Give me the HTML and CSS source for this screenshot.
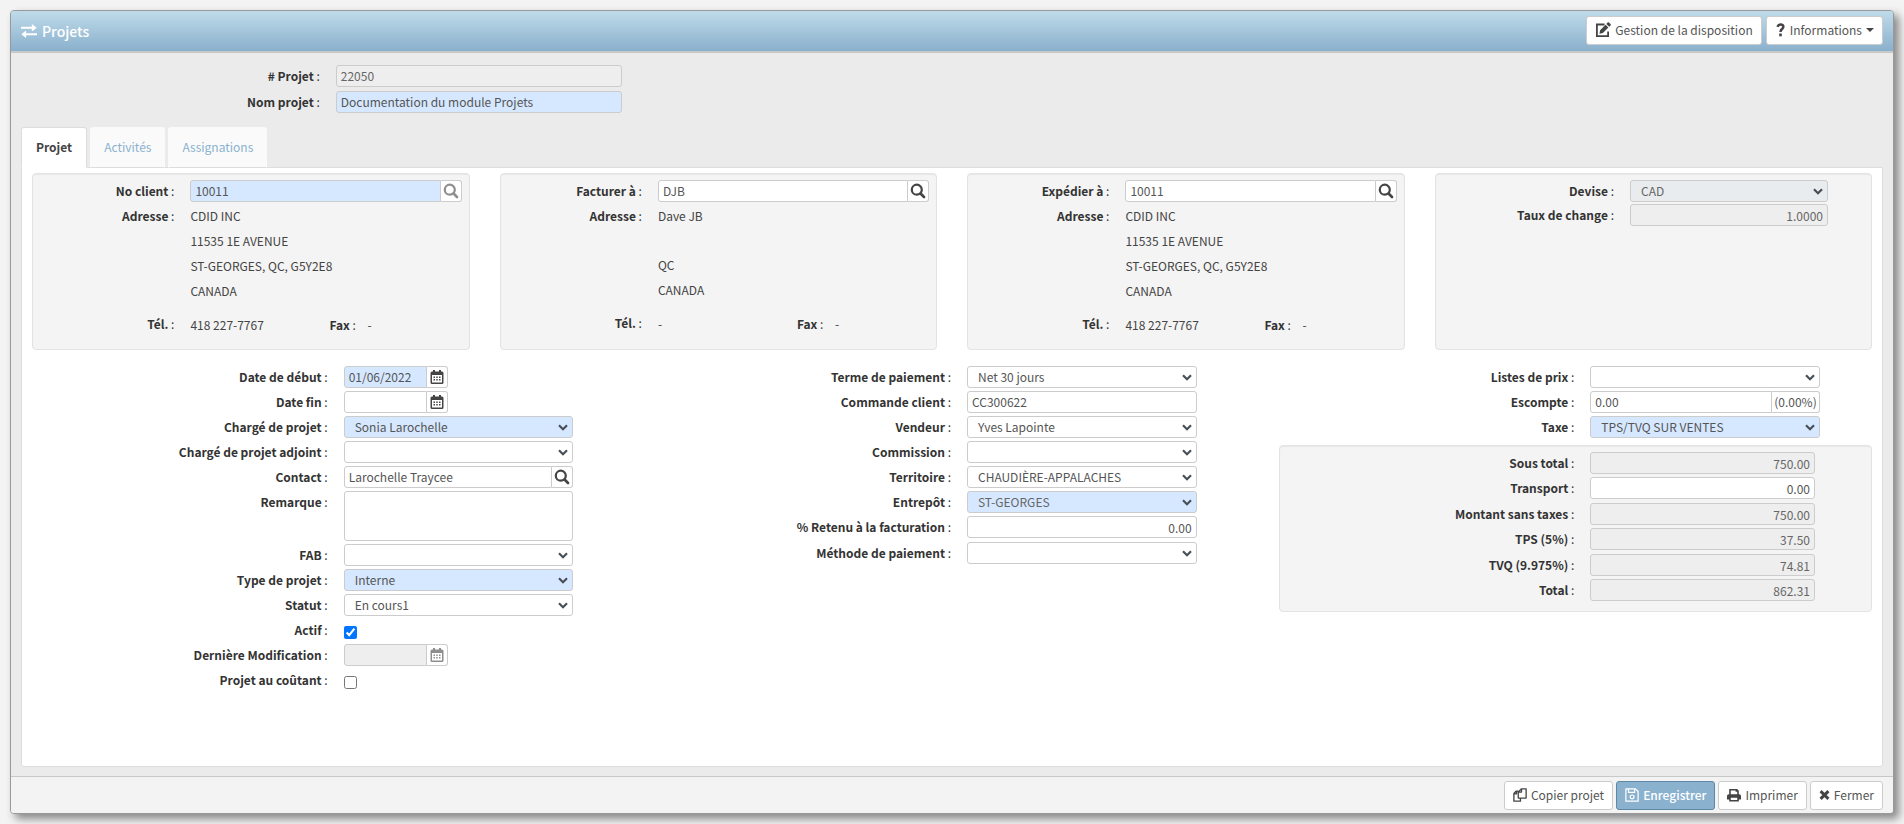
FILE: index.html
```html
<!DOCTYPE html>
<html lang="fr">
<head>
    <meta charset="UTF-8">
    <meta name="viewport" content="width=device-width, initial-scale=1.0">
    <title>Projets</title>
    <link rel="stylesheet" href="styles.css">
</head>
<body>
    <!-- Shared icons -->
    <svg class="sprite" aria-hidden="true">
        <symbol id="i-exchange" viewBox="0 0 17 14"><path d="M0 2.500h11.500V.5Q11.500-.5 12.300.2L16.700 3.500 12.300 6.900Q11.500 7.500 11.500 6.500V4.600H0zM17 9.400H5.500V7.500Q5.500 6.500 4.700 7.100L.3 10.500 4.700 13.800Q5.500 14.500 5.500 13.500V11.500H17z"/></symbol>
        <symbol id="i-search" viewBox="0 0 16 16"><path fill="none" stroke="currentColor" stroke-width="2.200" d="M11.800 6.700a5 5 0 1 1-10 0a5 5 0 0 1 10 0z"/><path fill="none" stroke="currentColor" stroke-width="2.700" stroke-linecap="round" d="M10.800 10.800l3.200 3.200"/></symbol>
        <symbol id="i-calendar" viewBox="0 0 14 14"><path fill-rule="evenodd" d="M3 0h2v1.500h4V0h2v1.500h1a1.500 1.500 0 0 1 1.500 1.500v9.500A1.500 1.500 0 0 1 12 14H2A1.500 1.500 0 0 1 .5 12.500V3A1.500 1.500 0 0 1 2 1.500h1zM2 5v7.500h10V5z"/><path d="M3.500 6.500H5V8H3.500zM6.250 6.500h1.500V8h-1.500zM9 6.500h1.500V8H9zM3.500 9H5v1.500H3.500zM6.250 9h1.500v1.500h-1.500zM9 9h1.500v1.500H9z"/></symbol>
        <symbol id="i-edit" viewBox="0 0 16 16"><path fill="none" stroke="currentColor" stroke-width="1.800" d="M9.500 2.500H1.900v11.600h11.200V9.500"/><path d="M12.600.6a1 1 0 0 1 1.400 0l1.500 1.500a1 1 0 0 1 0 1.400l-1.300 1.300-2.900-2.900zM10.500 2.700l2.900 2.900-5.500 5.500-3.400.6.600-3.500z"/></symbol>
        <symbol id="i-question" viewBox="0 0 10 16"><path fill="none" stroke="currentColor" stroke-width="2.800" d="M1.500 4.500C2.200 2.400 3.400 1.700 5 1.700c2 0 3.300 1.100 3.300 2.700C8.300 7 5 6.800 5 10.200"/><path d="M3.500 12h3v3.200h-3z"/></symbol>
        <symbol id="i-copy" viewBox="0 0 16 16"><path fill="none" stroke="currentColor" stroke-width="1.500" stroke-linejoin="round" d="M9.500 1H15v10.500H6V4.500zM9.700 1v3.700H6M6 3.500H3.700L1 6.200V15h7.500v-3.300M4 3.700v3H1"/></symbol>
        <symbol id="i-save" viewBox="0 0 16 16"><path fill="none" stroke="currentColor" stroke-width="1.400" stroke-linejoin="round" d="M1 1h11l3 3v11H1zM4 1v4h7V1M10.300 10.200a2.200 2.200 0 1 1-4.400 0a2.200 2.200 0 0 1 4.400 0z"/></symbol>
        <symbol id="i-print" viewBox="0 0 16 16"><path fill-rule="evenodd" d="M2.500 1h9l2 2v4h.5a2 2 0 0 1 2 2v4h-2.500v2.500h-11V13H0V9a2 2 0 0 1 2-2h.5zM4.300 2.800V7h7.400V4.300h-1.900V2.800zM4.300 11v2.700h7.400V11z"/></symbol>
        <symbol id="i-times" viewBox="0 0 14 14"><path fill="none" stroke="currentColor" stroke-width="3.800" d="M2 2l10 10M12 2L2 12"/></symbol>
    </svg>

    <div class="window">
        <header class="window-header">
            <h1><svg class="icon"><use href="#i-exchange"/></svg>Projets</h1>
            <div class="buttons">
                <button type="button" class="btn"><svg class="icon"><use href="#i-edit"/></svg>Gestion de la disposition</button>
                <button type="button" class="btn"><svg class="icon icon-narrow"><use href="#i-question"/></svg>Informations<span class="caret"></span></button>
            </div>
        </header>

        <main class="window-body">
            <div class="project-head">
                <div class="row"><label for="noProjet"><b># Projet</b> :</label><input id="noProjet" class="control" value="22050" disabled></div>
                <div class="row"><label for="nomProjet"><b>Nom projet</b> :</label><input id="nomProjet" class="control required" value="Documentation du module Projets"></div>
            </div>

            <nav class="tabs">
                <a href="#projet" class="tab active">Projet</a>
                <a href="#activites" class="tab">Activités</a>
                <a href="#assignations" class="tab">Assignations</a>
            </nav>

            <section class="panel" id="projet">
                <div class="cards">
                    <!-- Client -->
                    <div class="card">
                        <div class="row">
                            <label for="noClient"><b>No client</b> :</label>
                            <div class="group"><input id="noClient" class="control required" value="10011"><button type="button" class="addon" aria-label="Rechercher" disabled><svg class="icon"><use href="#i-search"/></svg></button></div>
                        </div>
                        <div class="row address">
                            <span class="label"><b>Adresse</b> :</span>
                            <div><p>CDID INC</p><p>11535 1E AVENUE</p><p>ST-GEORGES, QC, G5Y2E8</p><p>CANADA</p></div>
                        </div>
                        <div class="row phone">
                            <span class="label"><b>Tél.</b> :</span>
                            <div class="phone-values"><span>418 227-7767</span><span><b>Fax</b> :</span><span>-</span></div>
                        </div>
                    </div>
                    <!-- Facturation -->
                    <div class="card">
                        <div class="row">
                            <label for="facturer"><b>Facturer à</b> :</label>
                            <div class="group"><input id="facturer" class="control" value="DJB"><button type="button" class="addon" aria-label="Rechercher"><svg class="icon"><use href="#i-search"/></svg></button></div>
                        </div>
                        <div class="row address">
                            <span class="label"><b>Adresse</b> :</span>
                            <div><p>Dave JB</p><p class="blank"></p><p>QC</p><p>CANADA</p></div>
                        </div>
                        <div class="row phone">
                            <span class="label"><b>Tél.</b> :</span>
                            <div class="phone-values"><span>-</span><span><b>Fax</b> :</span><span>-</span></div>
                        </div>
                    </div>
                    <!-- Expédition -->
                    <div class="card">
                        <div class="row">
                            <label for="expedier"><b>Expédier à</b> :</label>
                            <div class="group"><input id="expedier" class="control" value="10011"><button type="button" class="addon" aria-label="Rechercher"><svg class="icon"><use href="#i-search"/></svg></button></div>
                        </div>
                        <div class="row address">
                            <span class="label"><b>Adresse</b> :</span>
                            <div><p>CDID INC</p><p>11535 1E AVENUE</p><p>ST-GEORGES, QC, G5Y2E8</p><p>CANADA</p></div>
                        </div>
                        <div class="row phone">
                            <span class="label"><b>Tél.</b> :</span>
                            <div class="phone-values"><span>418 227-7767</span><span><b>Fax</b> :</span><span>-</span></div>
                        </div>
                    </div>
                    <!-- Devise -->
                    <div class="card currency">
                        <div class="row"><label for="devise"><b>Devise</b> :</label><select id="devise" class="control" disabled><option>CAD</option></select></div>
                        <div class="row"><label for="taux"><b>Taux de change</b> :</label><input id="taux" class="control amount" value="1.0000" disabled></div>
                    </div>
                </div>

                <div class="columns">
                    <div class="column">
                        <div class="row"><label for="dateDebut"><b>Date de début</b> :</label><div class="group date"><input id="dateDebut" class="control required" value="01/06/2022"><button type="button" class="addon" aria-label="Calendrier"><svg class="icon icon-small"><use href="#i-calendar"/></svg></button></div></div>
                        <div class="row"><label for="dateFin"><b>Date fin</b> :</label><div class="group date"><input id="dateFin" class="control"><button type="button" class="addon" aria-label="Calendrier"><svg class="icon icon-small"><use href="#i-calendar"/></svg></button></div></div>
                        <div class="row"><label for="charge"><b>Chargé de projet</b> :</label><select id="charge" class="control required"><option>Sonia Larochelle</option></select></div>
                        <div class="row"><label for="adjoint"><b>Chargé de projet adjoint</b> :</label><select id="adjoint" class="control"><option></option></select></div>
                        <div class="row"><label for="contact"><b>Contact</b> :</label><div class="group"><input id="contact" class="control" value="Larochelle Traycee"><button type="button" class="addon" aria-label="Rechercher"><svg class="icon"><use href="#i-search"/></svg></button></div></div>
                        <div class="row"><label for="remarque"><b>Remarque</b> :</label><textarea id="remarque" class="control"></textarea></div>
                        <div class="row"><label for="fab"><b>FAB</b> :</label><select id="fab" class="control"><option></option></select></div>
                        <div class="row"><label for="type"><b>Type de projet</b> :</label><select id="type" class="control required"><option>Interne</option></select></div>
                        <div class="row"><label for="statut"><b>Statut</b> :</label><select id="statut" class="control"><option>En cours1</option></select></div>
                        <div class="row"><label for="actif"><b>Actif</b> :</label><input type="checkbox" id="actif" checked></div>
                        <div class="row"><label for="modif"><b>Dernière Modification</b> :</label><div class="group date"><input id="modif" class="control" disabled><button type="button" class="addon" aria-label="Calendrier" disabled><svg class="icon icon-small"><use href="#i-calendar"/></svg></button></div></div>
                        <div class="row"><label for="coutant"><b>Projet au coûtant</b> :</label><input type="checkbox" id="coutant"></div>
                    </div>

                    <div class="column">
                        <div class="row"><label for="terme"><b>Terme de paiement</b> :</label><select id="terme" class="control"><option>Net 30 jours</option></select></div>
                        <div class="row"><label for="commande"><b>Commande client</b> :</label><input id="commande" class="control" value="CC300622"></div>
                        <div class="row"><label for="vendeur"><b>Vendeur</b> :</label><select id="vendeur" class="control"><option>Yves Lapointe</option></select></div>
                        <div class="row"><label for="commission"><b>Commission</b> :</label><select id="commission" class="control"><option></option></select></div>
                        <div class="row"><label for="territoire"><b>Territoire</b> :</label><select id="territoire" class="control"><option>CHAUDIÈRE-APPALACHES</option></select></div>
                        <div class="row"><label for="entrepot"><b>Entrepôt</b> :</label><select id="entrepot" class="control required" disabled><option>ST-GEORGES</option></select></div>
                        <div class="row row-tall"><label for="retenu"><b>% Retenu à la facturation</b> :</label><input id="retenu" class="control amount" value="0.00"></div>
                        <div class="row"><label for="methode"><b>Méthode de paiement</b> :</label><select id="methode" class="control"><option></option></select></div>
                    </div>

                    <div class="column">
                        <div class="row"><label for="prix"><b>Listes de prix</b> :</label><select id="prix" class="control"><option></option></select></div>
                        <div class="row"><label for="escompte"><b>Escompte</b> :</label><div class="group"><input id="escompte" class="control" value="0.00"><span class="addon percent">(0.00%)</span></div></div>
                        <div class="row"><label for="taxe"><b>Taxe</b> :</label><select id="taxe" class="control required"><option>TPS/TVQ SUR VENTES</option></select></div>

                        <!-- Totaux -->
                        <div class="card totals">
                            <div class="row"><label for="sousTotal"><b>Sous total</b> :</label><input id="sousTotal" class="control amount" value="750.00" disabled></div>
                            <div class="row row-tall"><label for="transport"><b>Transport</b> :</label><input id="transport" class="control amount" value="0.00"></div>
                            <div class="row"><label for="montant"><b>Montant sans taxes</b> :</label><input id="montant" class="control amount" value="750.00" disabled></div>
                            <div class="row row-tall"><label for="tps"><b>TPS (5%)</b> :</label><input id="tps" class="control amount" value="37.50" disabled></div>
                            <div class="row"><label for="tvq"><b>TVQ (9.975%)</b> :</label><input id="tvq" class="control amount" value="74.81" disabled></div>
                            <div class="row row-tall"><label for="total"><b>Total</b> :</label><input id="total" class="control amount" value="862.31" disabled></div>
                        </div>
                    </div>
                </div>
            </section>
        </main>

        <footer class="window-footer">
            <button type="button" class="btn"><svg class="icon icon-small"><use href="#i-copy"/></svg>Copier projet</button>
            <button type="button" class="btn btn-primary"><svg class="icon icon-small"><use href="#i-save"/></svg>Enregistrer</button>
            <button type="button" class="btn"><svg class="icon icon-small"><use href="#i-print"/></svg>Imprimer</button>
            <button type="button" class="btn"><svg class="icon icon-narrow"><use href="#i-times"/></svg>Fermer</button>
        </footer>
    </div>
</body>
</html>
```
FILE: styles.css
```css
* {
    box-sizing: border-box;
}

body {
    margin: 0;
    padding: 10px;
    min-height: 100vh;
    display: flex;
    background-color: #f3f3f3;
    color: #333;
    font-family: "Noto Sans CJK SC", "Open Sans", sans-serif;
    font-size: 12px;
    line-height: 20px;
}

h1,
p {
    margin: 0;
}

input,
select,
textarea,
button {
    margin: 0;
    font: inherit;
    color: #555;
}

.sprite {
    position: absolute;
    width: 0;
    height: 0;
}

.icon {
    width: 16px;
    height: 16px;
    flex: none;
    fill: currentColor;
}

.icon-small {
    width: 14px;
    height: 14px;
}

.icon-narrow {
    width: 11px;
    height: 14px;
}

/* Window frame */
.window {
    flex: 1;
    display: flex;
    flex-direction: column;
    border: 1px solid #999;
    border-radius: 4px;
    background-color: #ebebeb;
    box-shadow: 5px 5px 8px #888;
}

.window-header {
    display: flex;
    justify-content: space-between;
    align-items: center;
    padding: 5px 10px 6px;
    border-bottom: 2px solid #c8c8c8;
    border-radius: 3px 3px 0 0;
    background-image: linear-gradient(#bfdbea, #8ab0cd);
}

.window-header h1 {
    display: flex;
    align-items: center;
    gap: 5px;
    color: #fff;
    font-size: 14px;
    font-weight: 500;
}

.buttons {
    display: flex;
    gap: 4px;
}

.window-body {
    flex: 1;
    display: flex;
    flex-direction: column;
    padding: 12px 10px 9px;
}

.window-footer {
    display: flex;
    justify-content: flex-end;
    gap: 3px;
    padding: 4px 10px 3px;
    border-top: 1px solid #c8c8c8;
    border-radius: 0 0 3px 3px;
    background-color: #f3f3f3;
}

/* Buttons */
.btn {
    display: flex;
    align-items: center;
    gap: 4px;
    height: 29px;
    padding: 0 8px 1px;
    border: 1px solid #ccc;
    border-radius: 3px;
    background-color: #fff;
    color: #555;
}

.btn .icon {
    color: #444;
}

.btn-primary,
.btn-primary .icon {
    color: #fff;
}

.btn-primary {
    border-color: #5f88a5;
    background-color: #8ab2cf;
    font-weight: 500;
}

.caret {
    border: 4px solid transparent;
    border-top-color: #444;
    border-bottom: 0;
}

/* Form rows */
.row {
    display: grid;
    grid-template-columns: 50% 1fr;
    column-gap: 16px;
    margin-bottom: 3px;
}

.row-tall {
    margin-bottom: 4px;
}

label,
.label {
    text-align: right;
    line-height: 22px;
}

.control {
    display: block;
    width: 100%;
    min-width: 0;
    height: 22px;
    padding: 0 4px 2px;
    border: 1px solid #ccc;
    border-radius: 3px;
    background-color: #fff;
}

.control:disabled {
    background-color: #eee;
    color: #666;
}

select.control {
    appearance: none;
    padding: 0 20px 0 10px;
    line-height: 18px;
    background-image: url("data:image/svg+xml,%3Csvg xmlns='http://www.w3.org/2000/svg' viewBox='0 0 10 7'%3E%3Cpath fill='none' stroke='%23495057' stroke-width='2.200' d='M1 1.200l4 4 4-4'/%3E%3C/svg%3E");
    background-repeat: no-repeat;
    background-position: right 4px center;
    background-size: 10px 7px;
}

select.control:disabled {
    background-color: #e9ecef;
    opacity: 1;
}

textarea.control {
    height: 50px;
    resize: none;
}

.control.required,
select.control.required:disabled {
    background-color: #d6e8ff;
}

.control.amount {
    padding-bottom: 0;
    text-align: right;
}

input[type="checkbox"] {
    width: 13px;
    height: 13px;
    margin-top: 7px;
}

.group {
    display: flex;
}

.group .control {
    border-radius: 3px 0 0 3px;
}

.date {
    width: 104px;
}

.addon {
    flex: none;
    display: flex;
    align-items: center;
    justify-content: center;
    width: 21px;
    height: 22px;
    padding: 0;
    border: 1px solid #ccc;
    border-left: 0;
    border-radius: 0 3px 3px 0;
    background-color: #fff;
    color: #444;
}

.addon:disabled .icon {
    opacity: 0.6;
}

.percent {
    width: 48px;
    color: #555;
}

.project-head {
    margin-bottom: 10px;
    padding-left: 1px;
}

.project-head .row {
    grid-template-columns: 16% 286px;
    margin-bottom: 4px;
}

/* Tabs */
.tabs {
    display: flex;
    gap: 3px;
    margin-bottom: -1px;
    position: relative;
}

.tab {
    height: 41px;
    padding: 0 13px;
    border: 1px solid transparent;
    border-bottom-color: #ddd;
    border-radius: 3px 3px 0 0;
    background-color: #fafafa;
    color: #8ab2cf;
    line-height: 38px;
    text-decoration: none;
}

.tab.active {
    padding: 0 14px;
    border-color: #ddd;
    border-bottom-color: #fff;
    background-color: #fff;
    color: #444;
    font-weight: 700;
}

.panel {
    flex: 1;
    padding: 5px 10px;
    border: 1px solid #ddd;
    border-radius: 0 0 3px 3px;
    background-color: #fff;
}

/* Cards */
.cards {
    display: grid;
    grid-template-columns: repeat(4, 1fr);
    gap: 30px;
    margin-bottom: 16px;
}

.card {
    padding: 6px 7px 6px 0;
    border: 1px solid #e3e3e3;
    border-radius: 4px;
    background-color: #f4f4f4;
    box-shadow: inset 0 1px 1px rgba(0, 0, 0, 0.05);
}

.cards .card {
    min-height: 177px;
}

.cards .row {
    grid-template-columns: 33% 1fr;
}

.cards .address p {
    line-height: 22px;
    margin-bottom: 3px;
}

.cards .address .blank {
    height: 21px;
}

.cards .phone {
    margin-top: 8px;
}

.phone-values {
    display: grid;
    grid-template-columns: 139px 38px 1fr;
    line-height: 24px;
}

.address p,
.phone-values {
    color: #444;
}

.phone-values b {
    color: #333;
}

.cards .currency {
    padding-right: 43px;
}

.cards .currency .row {
    grid-template-columns: 1fr 198px;
    margin-bottom: 2px;
}

.columns {
    display: grid;
    grid-template-columns: repeat(3, 1fr);
    gap: 30px;
}

.column > .row {
    grid-template-columns: calc(50% + 25px) 1fr;
    padding-right: 52px;
}

.column > .totals {
    margin-top: 7px;
    padding-right: 56px;
}

.totals .row {
    grid-template-columns: calc(50% + 27px) 1fr;
}
```
